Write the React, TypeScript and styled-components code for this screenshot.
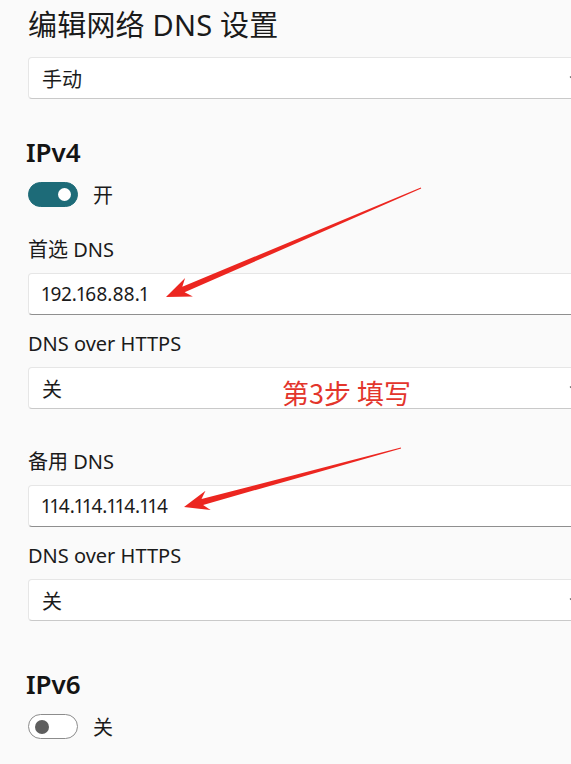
import styled, { createGlobalStyle } from 'styled-components'

const GlobalStyle = createGlobalStyle`
  html, body {
    margin: 0;
    padding: 0;
    background: #fafafa;
    overflow: hidden;
  }
  body {
    font-family: "Noto Sans", "Noto Sans CJK SC", sans-serif;
    color: #1b1b1b;
  }
`

type Pt = [number, number]

// tapered annotation arrow, thin at the tail, barbed head at the tip
function arrowPoints(tip: Pt, tail: Pt) {
  const dx = tail[0] - tip[0]
  const dy = tail[1] - tip[1]
  const len = Math.hypot(dx, dy)
  const u: Pt = [dx / len, dy / len]
  const n: Pt = [-u[1], u[0]]
  const at = (d: number, w: number): string =>
    `${(tip[0] + u[0] * d + n[0] * w).toFixed(1)},${(tip[1] + u[1] * d + n[1] * w).toFixed(1)}`
  return [
    at(0, 0),
    at(25, 10),
    at(19, 3),
    at(len, 0.5),
    at(len, -0.5),
    at(19, -3),
    at(25, -10),
  ].join(' ')
}

export default function App() {
  return (
    <>
      <GlobalStyle />
      <Page>
        <Title>编辑网络 DNS 设置</Title>
        <Select $top={14}>
          <span>手动</span>
          <Chevron />
        </Select>

        <Heading>IPv4</Heading>
        <ToggleRow>
          <Switch $on>
            <Knob $on />
          </Switch>
          <span>开</span>
        </ToggleRow>

        <Group $top={30}>
          <Field>
            <Label>首选 DNS</Label>
            <TextBox>192.168.88.1</TextBox>
          </Field>
          <Field>
            <Label>DNS over HTTPS</Label>
            <Select>
              <span>关</span>
              <Chevron />
            </Select>
          </Field>
        </Group>

        <Group $top={40}>
          <Field>
            <Label>备用 DNS</Label>
            <TextBox>114.114.114.114</TextBox>
          </Field>
          <Field>
            <Label>DNS over HTTPS</Label>
            <Select>
              <span>关</span>
              <Chevron />
            </Select>
          </Field>
        </Group>

        <Heading $top={47}>IPv6</Heading>
        <ToggleRow>
          <Switch>
            <Knob />
          </Switch>
          <span>关</span>
        </ToggleRow>

        <Annotations>
          <svg width="571" height="764" viewBox="0 0 571 764">
            <polygon points={arrowPoints([166, 297], [421, 188])} fill="#ec2620" />
            <polygon points={arrowPoints([184, 507], [401, 448])} fill="#ec2620" />
          </svg>
          <StepNote>第3步 填写</StepNote>
        </Annotations>
      </Page>
    </>
  )
}

function Chevron() {
  return (
    <ChevronIcon width="12" height="8" viewBox="0 0 12 8">
      <path d="M1 1.5 L6 6.5 L11 1.5" fill="none" stroke="#5a5a5a" strokeWidth="1.1" />
    </ChevronIcon>
  )
}

const Page = styled.div`
  position: relative;
  box-sizing: border-box;
  width: 571px;
  height: 764px;
  padding: 7px 0 0 28px;
`

const Title = styled.h1`
  margin: 0;
  font-size: 29px;
  line-height: 36px;
  font-weight: 400;
  color: #1a1a1a;
  letter-spacing: 0.2px;
`

const Heading = styled.h2<{ $top?: number }>`
  margin: ${(p) => p.$top ?? 37}px 0 0 -2px;
  font-size: 26px;
  line-height: 32px;
  font-weight: 600;
  color: #141414;
`

const ToggleRow = styled.div`
  display: flex;
  align-items: center;
  gap: 15px;
  height: 25px;
  margin-top: 14px;
  font-size: 20px;
  font-family: "Noto Sans CJK SC", sans-serif;
  color: #1b1b1b;
`

const Switch = styled.div<{ $on?: boolean }>`
  box-sizing: border-box;
  width: 50px;
  height: 25px;
  border-radius: 13px;
  display: flex;
  align-items: center;
  justify-content: ${(p) => (p.$on ? 'flex-end' : 'flex-start')};
  padding: 0 6px;
  background: ${(p) => (p.$on ? '#1d6b78' : '#ffffff')};
  border: 1px solid ${(p) => (p.$on ? '#1d6b78' : '#8c8c8c')};
`

const Knob = styled.div<{ $on?: boolean }>`
  width: ${(p) => (p.$on ? 13 : 14)}px;
  height: ${(p) => (p.$on ? 13 : 14)}px;
  border-radius: 50%;
  background: ${(p) => (p.$on ? '#ffffff' : '#5e5e5e')};
`

const Group = styled.div<{ $top: number }>`
  display: flex;
  flex-direction: column;
  gap: 16px;
  margin-top: ${(p) => p.$top}px;
`

const Field = styled.div`
  display: flex;
  flex-direction: column;
  gap: 10px;
`

const Label = styled.div`
  font-size: 20px;
  line-height: 26px;
  color: #1b1b1b;
`

const boxBase = `
  box-sizing: border-box;
  width: 566px;
  height: 42px;
  display: flex;
  align-items: center;
  padding: 0 12px 0 13px;
  background: #ffffff;
  border: 1px solid #e6e6e6;
  border-bottom-color: #c9c9c9;
  border-radius: 4px;
  color: #1b1b1b;
`

const Select = styled.div<{ $top?: number }>`
  ${boxBase}
  justify-content: space-between;
  margin-top: ${(p) => p.$top ?? 0}px;
  font-size: 20px;
  font-family: "Noto Sans CJK SC", sans-serif;
`

const TextBox = styled.div`
  ${boxBase}
  border-bottom: 1.5px solid #8f8f8f;
  font-size: 19px;
  font-variant-numeric: proportional-nums;
`

const ChevronIcon = styled.svg`
  flex: none;
  margin-top: 2px;
`

const Annotations = styled.div`
  position: absolute;
  inset: 0;
  pointer-events: none;

  svg {
    position: absolute;
    left: 0;
    top: 0;
  }
`

const StepNote = styled.div`
  position: absolute;
  left: 282px;
  top: 377px;
  font-size: 27px;
  line-height: 32px;
  font-family: "Noto Sans CJK SC", sans-serif;
  color: #e3352c;
`
